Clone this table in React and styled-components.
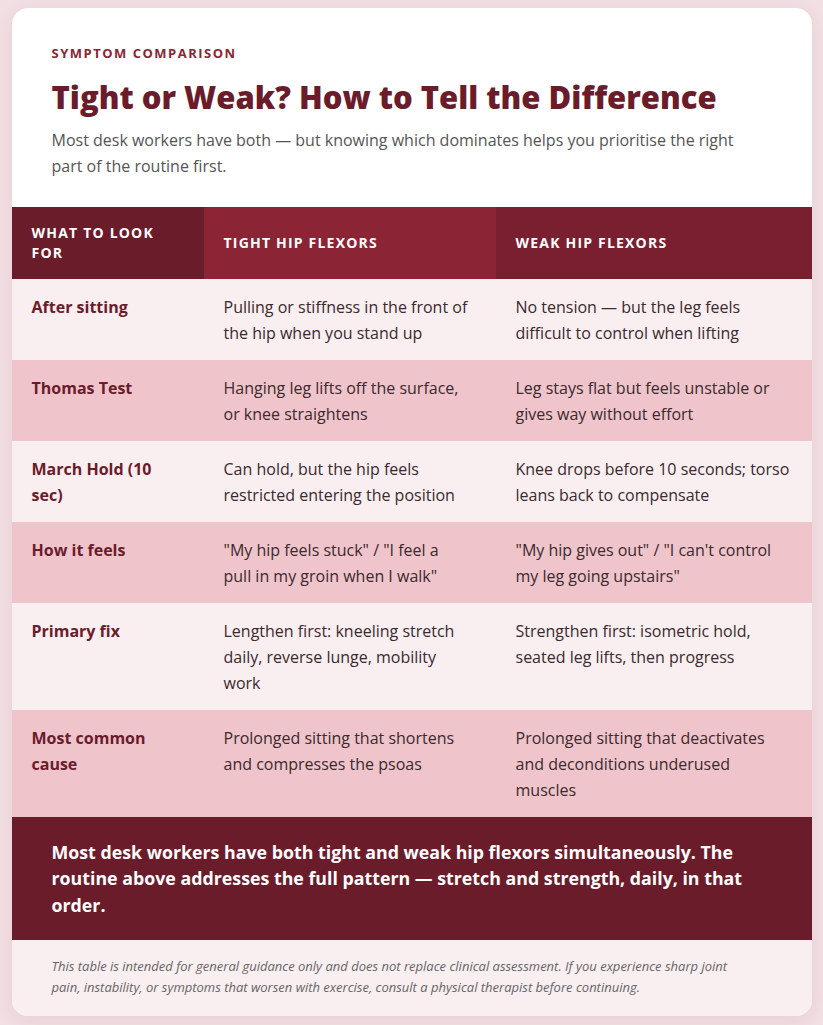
import React from 'react';
import styled, { createGlobalStyle } from 'styled-components';

const GlobalStyle = createGlobalStyle`
  body {
    margin: 0;
    background: #f2dfe3;
    font-family: "Open Sans", "Noto Sans", sans-serif;
  }
`;

const Page = styled.div`
  padding: 8px 0 10px;
`;

const Card = styled.div`
  width: 800px;
  margin: 0 auto;
  background: #ffffff;
  border-radius: 16px;
  overflow: hidden;
  box-shadow: 0 4px 18px rgba(107, 28, 43, 0.08);
`;

const Header = styled.div`
  padding: 36px 40px 28px;
`;

const Eyebrow = styled.div`
  font-size: 13px;
  font-weight: 700;
  letter-spacing: 1.5px;
  text-transform: uppercase;
  color: #8b2535;
`;

const Title = styled.h1`
  margin: 16px 0 10px;
  font-size: 31px;
  font-weight: 800;
  color: #6b1c2b;
  line-height: 1.25;
`;

const Lede = styled.p`
  margin: 0;
  max-width: 700px;
  font-size: 16px;
  line-height: 26px;
  color: #555;
`;

const Table = styled.div`
  display: grid;
  grid-template-columns: 192px 292px 316px;
`;

const HeadCell = styled.div`
  background: ${p => p.bg};
  color: #fff;
  font-size: 14px;
  font-weight: 700;
  letter-spacing: 1.2px;
  text-transform: uppercase;
  line-height: 20px;
  padding: 16px 20px;
  min-height: 72px;
  box-sizing: border-box;
  display: flex;
  align-items: center;
`;

const Cell = styled.div`
  background: ${p => (p.alt ? '#efc4cb' : '#f9eef0')};
  padding: 15px 20px 14px;
  font-size: 16px;
  line-height: 26px;
  color: ${p => (p.label ? '#6b1c2b' : '#3b2a2e')};
  font-weight: ${p => (p.label ? 700 : 400)};
`;

const Banner = styled.div`
  background: #6b1c2b;
  color: #fff;
  padding: 22px 40px 22px;
  font-size: 17.8px;
  font-weight: 700;
  line-height: 26.5px;
`;

const Note = styled.div`
  background: #f9eef0;
  padding: 16px 60px 18px 40px;
  font-size: 13px;
  font-style: italic;
  line-height: 21px;
  color: #666;
`;

const rows = [
  ['After sitting', 'Pulling or stiffness in the front of the hip when you stand up', 'No tension — but the leg feels difficult to control when lifting'],
  ['Thomas Test', 'Hanging leg lifts off the surface, or knee straightens', 'Leg stays flat but feels unstable or gives way without effort'],
  ['March Hold (10 sec)', 'Can hold, but the hip feels restricted entering the position', 'Knee drops before 10 seconds; torso leans back to compensate'],
  ['How it feels', '"My hip feels stuck" / "I feel a pull\u00A0in my groin when I walk"', '"My hip gives out" / "I can\'t control my leg going upstairs"'],
  ['Primary fix', 'Lengthen first: kneeling stretch daily, reverse lunge, mobility work', 'Strengthen first: isometric hold, seated leg lifts, then progress'],
  ['Most common cause', 'Prolonged sitting that shortens and compresses the psoas', 'Prolonged sitting that deactivates and deconditions underused muscles'],
];

const App = () => {
  return (
    <Page>
      <GlobalStyle />
      <Card>
        <Header>
          <Eyebrow>Symptom Comparison</Eyebrow>
          <Title>Tight or Weak? How to Tell the Difference</Title>
          <Lede>
            Most desk workers have both — but knowing which dominates helps you prioritise the right part of the routine first.
          </Lede>
        </Header>
        <Table>
          <HeadCell bg="#6b1c2b">What to look for</HeadCell>
          <HeadCell bg="#8b2535">Tight hip flexors</HeadCell>
          <HeadCell bg="#7a1f30">Weak hip flexors</HeadCell>
          {rows.map((row, i) => (
            <React.Fragment key={row[0]}>
              <Cell alt={i % 2 === 1} label>{row[0]}</Cell>
              <Cell alt={i % 2 === 1}>{row[1]}</Cell>
              <Cell alt={i % 2 === 1}>{row[2]}</Cell>
            </React.Fragment>
          ))}
        </Table>
        <Banner>
          Most desk workers have both tight and weak hip flexors simultaneously. The routine above addresses the full pattern — stretch and strength, daily, in that order.
        </Banner>
        <Note>
          This table is intended for general guidance only and does not replace clinical assessment. If you experience sharp joint pain, instability, or symptoms that worsen with exercise, consult a physical therapist before continuing.
        </Note>
      </Card>
    </Page>
  );
};

export default App;
